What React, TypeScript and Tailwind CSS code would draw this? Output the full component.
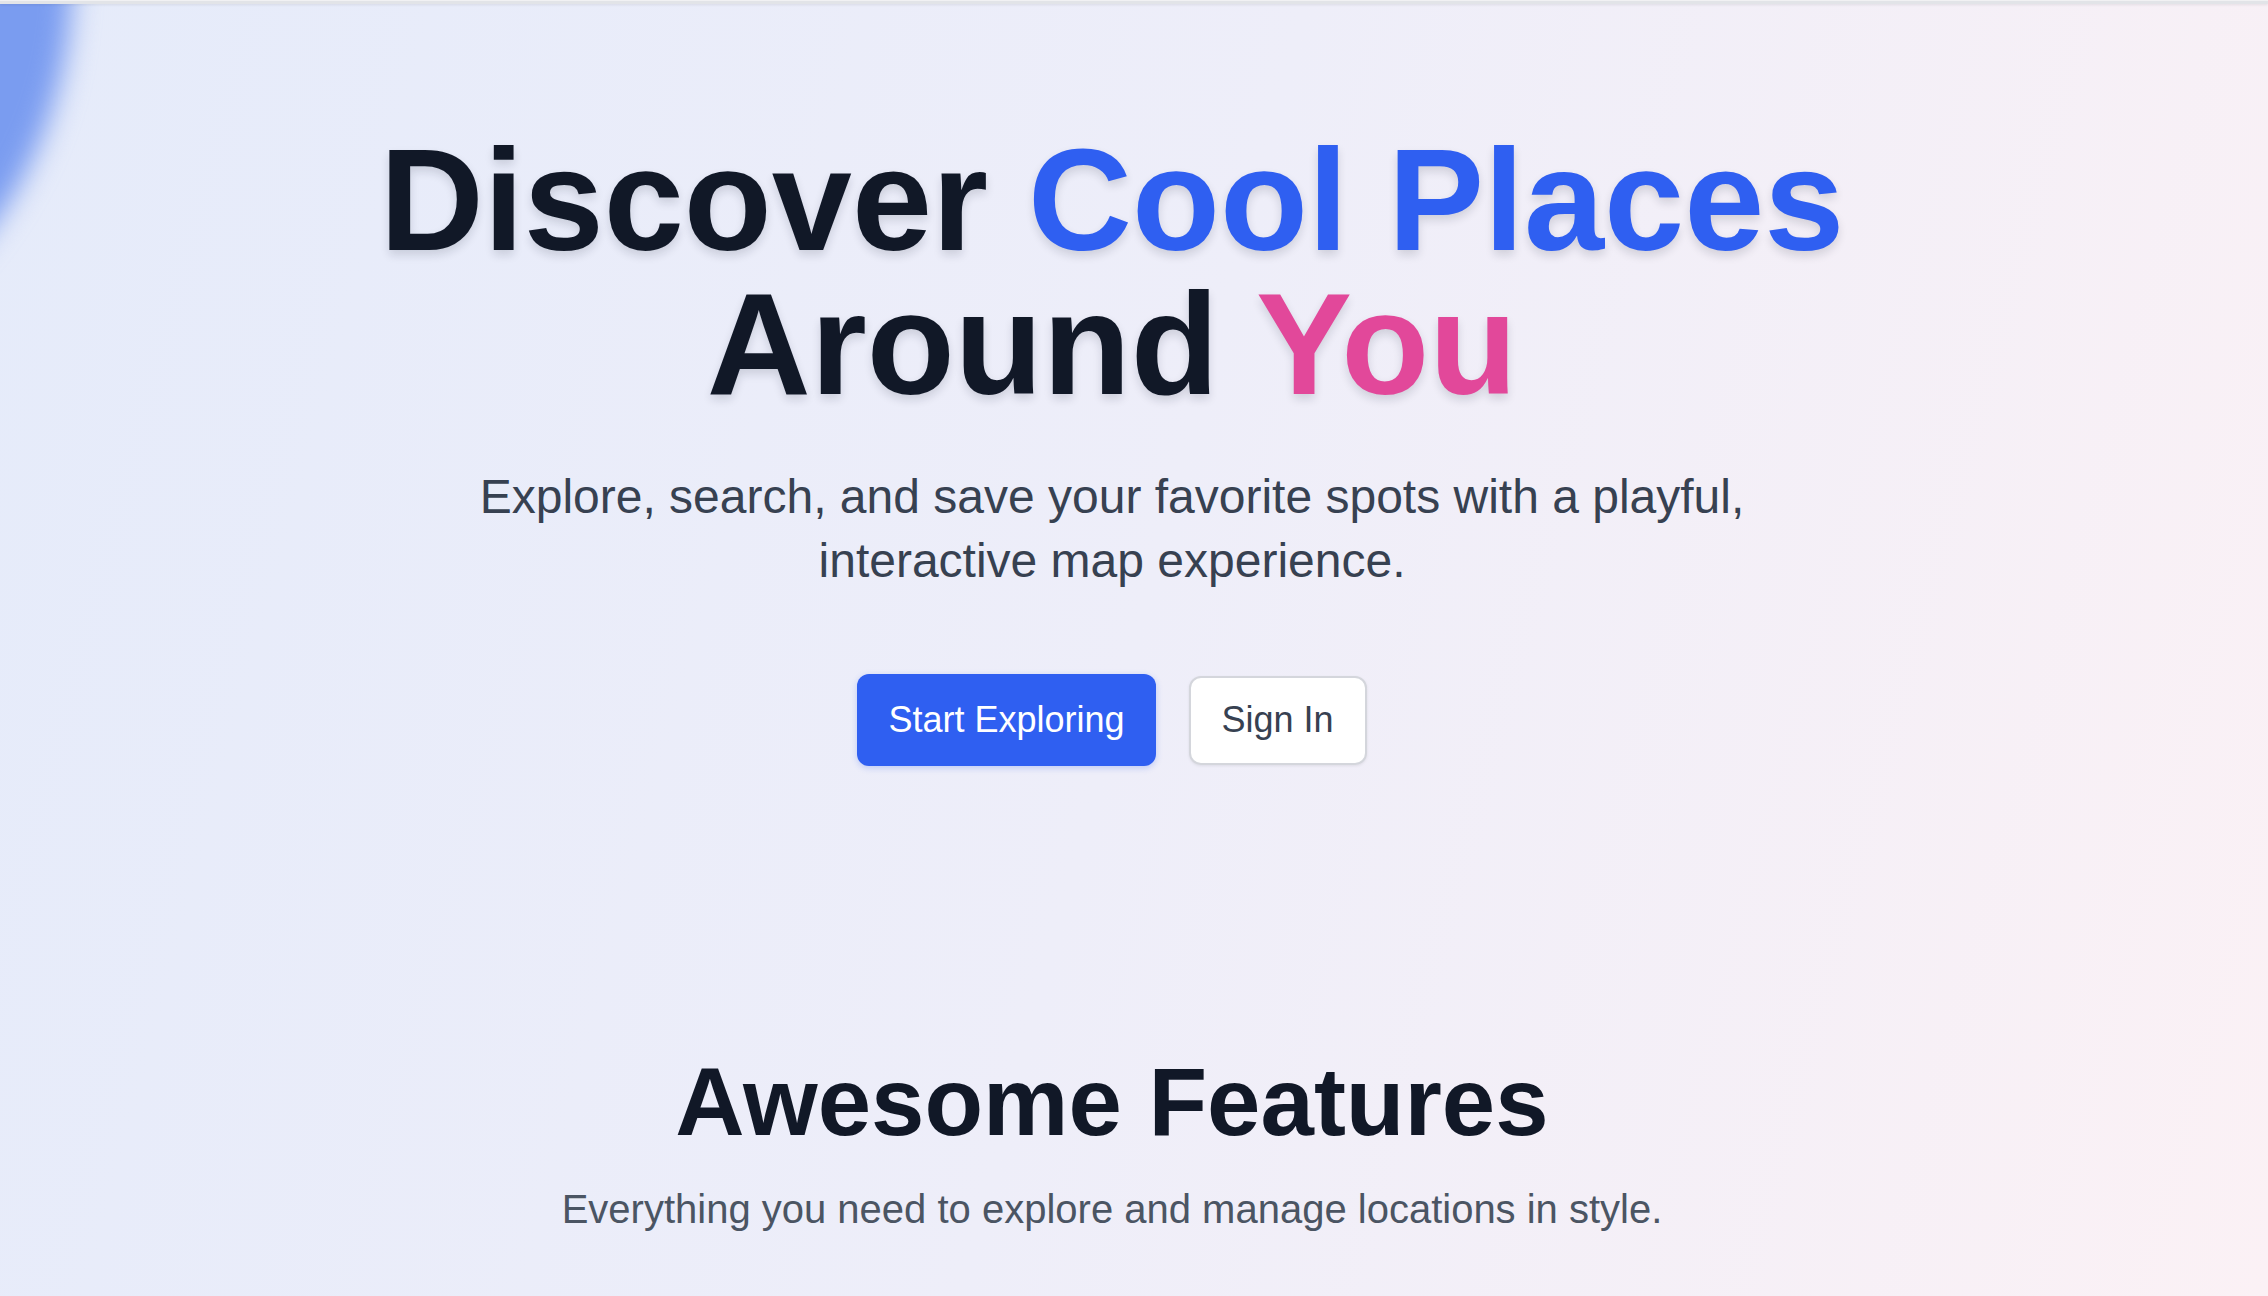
import React from 'react'

export default function App() {
  return (
    <div className="relative h-[1296px] w-full overflow-hidden bg-[linear-gradient(105deg,#e5ebfa_0%,#eeeef9_50%,#fbf1f5_100%)] font-['Liberation_Sans',Arial,sans-serif]">
      {/* decorative blob */}
      <div className="pointer-events-none absolute left-[-768px] top-[-440px] h-[840px] w-[840px] rounded-full bg-[#7a9cf0] blur-[14px]" />

      {/* top bar */}
      <div className="relative h-[4px] w-full border-t border-[#f1f1f3] bg-[#e2e4e8] shadow-[0_1px_3px_rgba(0,0,0,0.08)]" />

      <main className="relative flex flex-col items-center pr-[44px] text-center">
        {/* Hero */}
        <section className="flex flex-col items-center pt-[125px]">
          <h1 className="text-[144px] font-bold leading-none text-[#111827] [text-shadow:0_5px_10px_rgba(17,24,39,0.14)]">
            <span className="block">
              Discover <span className="text-[#2f5ff1]">Cool Places</span>
            </span>
            <span className="block">
              Around <span className="text-[#e2489a]">You</span>
            </span>
          </h1>
          <p className="mt-[48px] max-w-[1300px] text-[48px] leading-[64px] text-[#374151]">
            Explore, search, and save your favorite spots with a playful, interactive map experience.
          </p>
          <div className="mt-[81px] flex items-center gap-[33px]">
            <button className="h-[92px] rounded-[12px] bg-[#2f5ff1] px-[31px] text-[36px] text-white shadow-[0_2px_6px_rgba(47,95,241,0.25)]">
              Start Exploring
            </button>
            <button className="h-[89px] rounded-[12px] border-2 border-[#d4d6dc] bg-white px-[31px] text-[36px] text-[#374151] shadow-[0_1px_3px_rgba(0,0,0,0.08)]">
              Sign In
            </button>
          </div>
        </section>

        {/* Features */}
        <section className="mt-[288px] flex flex-col items-center">
          <h2 className="text-[96px] font-bold leading-[96px] text-[#111827]">Awesome Features</h2>
          <p className="mt-[31px] text-[40px] leading-[56px] text-[#4b5563]">
            Everything you need to explore and manage locations in style.
          </p>
        </section>
      </main>
    </div>
  )
}
